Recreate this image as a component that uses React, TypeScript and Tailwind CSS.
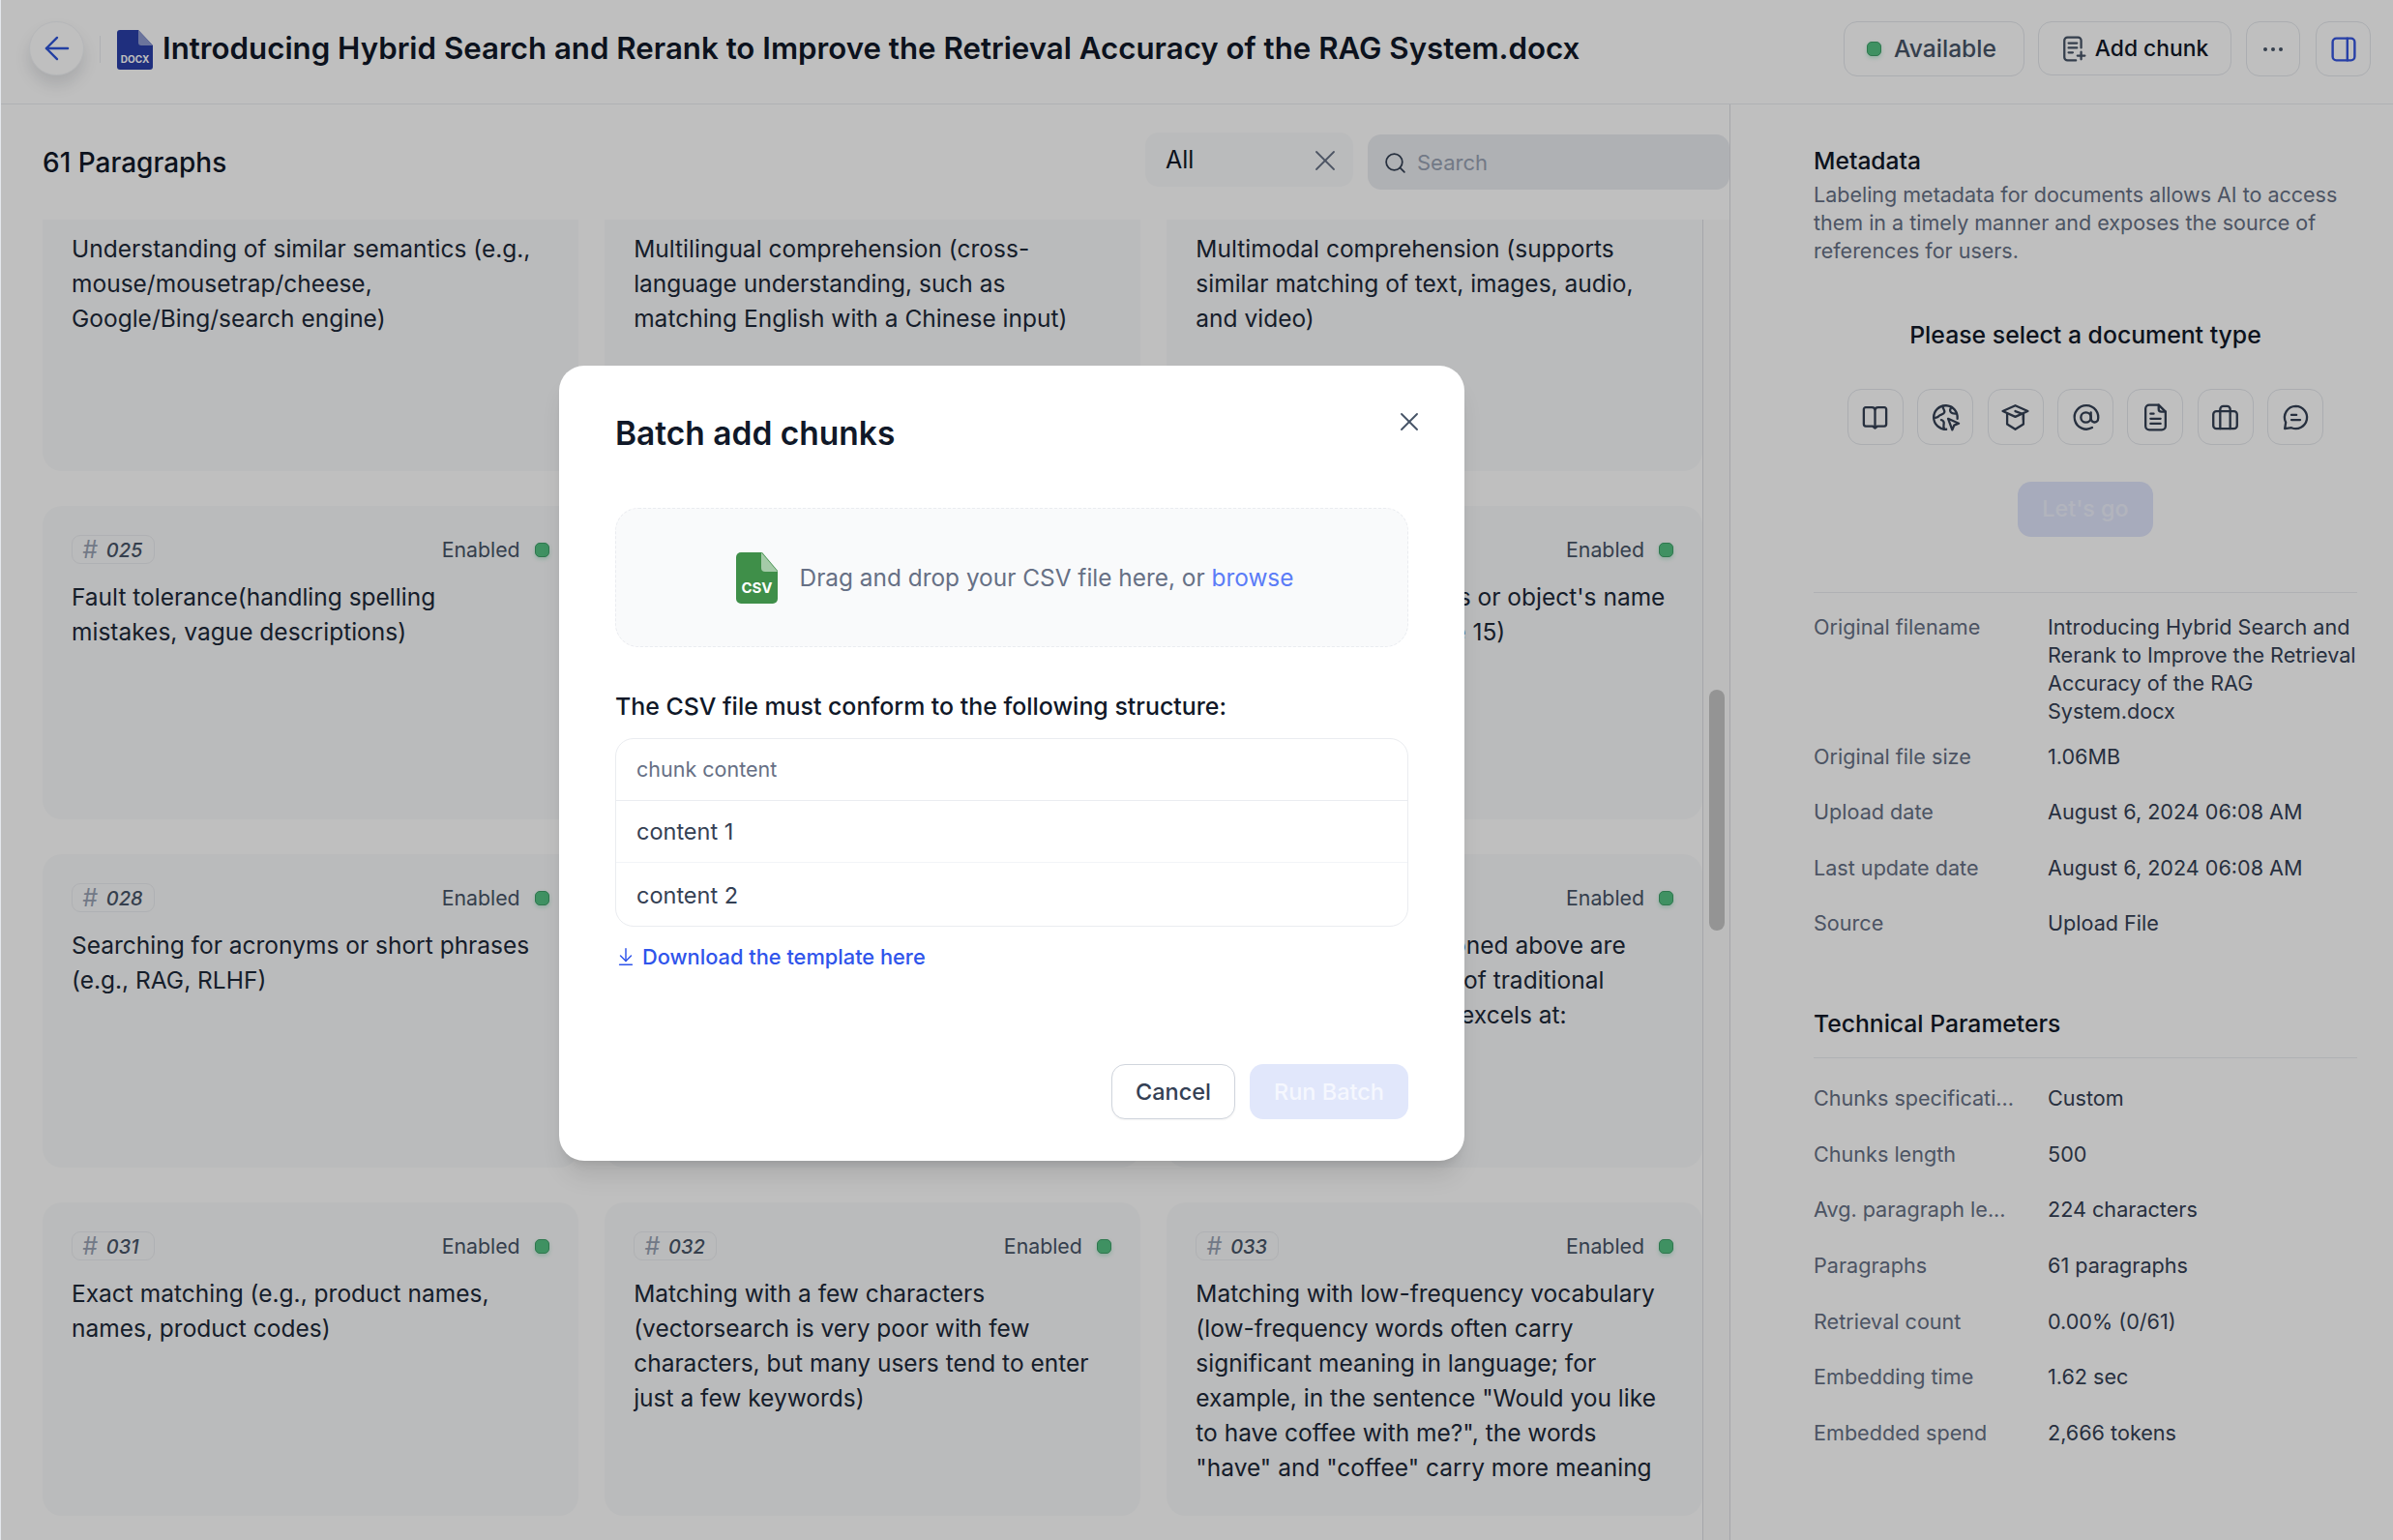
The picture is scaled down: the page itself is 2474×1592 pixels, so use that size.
// App.tsx — document chunks page with the "Batch add chunks" dialog open
import { ArrowLeft, ArrowDownToLine, Search, X } from "lucide-react";
import type { ReactNode } from "react";

// scrolled: header is above the fold, covered: card sits entirely under the dialog
type Chunk = { id: string; text?: ReactNode; scrolled?: boolean; covered?: boolean };

const CHUNKS: Chunk[] = [
  { id: "022", scrolled: true, text: "Understanding of similar semantics (e.g., mouse/mousetrap/cheese, Google/Bing/search engine)" },
  { id: "023", scrolled: true, text: "Multilingual comprehension (cross-language understanding, such as matching English with a Chinese input)" },
  { id: "024", scrolled: true, text: "Multimodal comprehension (supports similar matching of text, images, audio, and video)" },
  { id: "025", text: "Fault tolerance(handling spelling mistakes, vague descriptions)" },
  { id: "026", covered: true },
  { id: "027", text: <>Searching for a person's or object's name<br />(e.g., Elon Musk, iPhone 15)</> },
  { id: "028", text: "Searching for acronyms or short phrases (e.g., RAG, RLHF)" },
  { id: "029", covered: true },
  { id: "030", text: <>The query cases mentioned above are<br />really the key strengths of traditional<br />keyword search, which excels at:</> },
  { id: "031", text: "Exact matching (e.g., product names, names, product codes)" },
  { id: "032", text: "Matching with a few characters (vectorsearch is very poor with few characters, but many users tend to enter just a few keywords)" },
  { id: "033", text: 'Matching with low-frequency vocabulary (low-frequency words often carry significant meaning in language; for example, in the sentence "Would you like to have coffee with me?", the words "have" and "coffee" carry more meaning' },
];

const FILE_INFO: [string, string][] = [
  ["Original file size", "1.06MB"],
  ["Upload date", "August 6, 2024 06:08 AM"],
  ["Last update date", "August 6, 2024 06:08 AM"],
  ["Source", "Upload File"],
];

const TECH_INFO: [string, string][] = [
  ["Chunks specificati...", "Custom"],
  ["Chunks length", "500"],
  ["Avg. paragraph le...", "224 characters"],
  ["Paragraphs", "61 paragraphs"],
  ["Retrieval count", "0.00% (0/61)"],
  ["Embedding time", "1.62 sec"],
  ["Embedded spend", "2,666 tokens"],
];

function StatusDot() {
  return <span className="h-[15px] w-[15px] shrink-0 rounded-[5px] border border-[#3f9f69] bg-[#55c283] shadow-[0_2px_4px_rgba(23,178,106,0.25)]" />;
}

function DocxIcon() {
  return (
    <svg width="37" height="41" viewBox="0 0 37 41" className="shrink-0">
      <path d="M3 0h19l15 16v22a3 3 0 0 1-3 3H3a3 3 0 0 1-3-3V3a3 3 0 0 1 3-3z" fill="#2a3fa8" />
      <path d="M22 0l15 16H25a3 3 0 0 1-3-3z" fill="#8f9bd0" />
      <text x="18.5" y="34" textAnchor="middle" fontSize="10" fontWeight="700" fill="#fff" fontFamily="Inter, sans-serif">DOCX</text>
    </svg>
  );
}

function CsvIcon() {
  return (
    <svg width="43" height="53" viewBox="0 0 43 53" className="shrink-0">
      <path d="M5 0h22l16 19v29a5 5 0 0 1-5 5H5a5 5 0 0 1-5-5V5a5 5 0 0 1 5-5z" fill="#3f8f49" />
      <path d="M26 0l17 20H30a4 4 0 0 1-4-4z" fill="#a5cba8" />
      <text x="21.5" y="42" textAnchor="middle" fontSize="15" fontWeight="700" fill="#fff" fontFamily="Inter, sans-serif">CSV</text>
    </svg>
  );
}

const iconStroke = { fill: "none", stroke: "currentColor", strokeWidth: 1.5, strokeLinecap: "round", strokeLinejoin: "round" } as const;

function AddChunkIcon() {
  return (
    <svg width="26" height="29" viewBox="0 0 24 26" {...iconStroke} strokeWidth={2.1} className="shrink-0 text-[#475467]">
      <path d="M19 12V5a3 3 0 0 0-3-3H6a3 3 0 0 0-3 3v16a3 3 0 0 0 3 3h8" />
      <path d="M7 7.5h8M7 12h8M7 16.5h4" />
      <path d="M19 16v7M15.500 19.500h7" />
    </svg>
  );
}

function PanelIcon() {
  return (
    <svg width="26" height="26" viewBox="0 0 24 24" {...iconStroke} strokeWidth={2.2} className="text-[#3455df]">
      <rect x="1.500" y="1.500" width="21" height="21" rx="3.500" />
      <path d="M15.500 1.500v21" />
    </svg>
  );
}

const DOC_TYPE_ICONS: ReactNode[] = [
  <path d="M12 20V6.500C12 5 11 4 9.500 4H4.500C3.700 4 3 4.700 3 5.500v12c0 .8.7 1.500 1.500 1.500H10l2 1.500 2-1.500h5.500c.8 0 1.500-.7 1.500-1.500v-12C21 4.700 20.300 4 19.500 4h-5C13 4 12 5 12 6.500" />,
  <>
    <path d="M12.500 21.500A9.500 9.500 0 1 1 21.400 13" />
    <path d="M9.500 3c.5 2.500 2 3 1.500 5-.5 2-3.500 1.500-4.500 3-.8 1.300-3 1.500-4 1" />
    <path d="M17 3.800c-1.500 1-2 2.800-.8 4.200 1 1.200 3 1 4.200 1" />
    <path d="M8.500 14c1.500.3 2.500 1.500 2 3.500-.3 1.500-.5 2.500.5 4" />
    <path d="M14 13l8.500 3.800-3.700 1.500-1.500 3.700z" />
  </>,
  <>
    <path d="M12 2.500L2 7l10 4.500L22 7z" />
    <path d="M5.500 9.500v8l6.500 4 6.500-4v-8" />
    <path d="M12 7l6.500 2.500v4.500" />
  </>,
  <>
    <circle cx="12" cy="12" r="4" />
    <path d="M16 8v5a3 3 0 0 0 5.500 1.500A9.500 9.500 0 1 0 17 20.200" />
  </>,
  <>
    <path d="M14.500 2H7a3 3 0 0 0-3 3v14a3 3 0 0 0 3 3h10a3 3 0 0 0 3-3V7.500z" />
    <path d="M14.500 2v3.500c0 1.100.9 2 2 2H20" />
    <path d="M8 9h2.500M8 13h8M8 17h8" />
  </>,
  <>
    <rect x="2.500" y="7" width="19" height="14" rx="2.500" />
    <path d="M8 21V5.500A2.500 2.500 0 0 1 10.500 3h3A2.500 2.500 0 0 1 16 5.500V21" />
  </>,
  <>
    <path d="M12 3a9 9 0 1 1-3.500 17.300L3.200 21l.8-5A9 9 0 0 1 12 3z" />
    <path d="M8.500 10h4M8.500 14h7" />
  </>,
];

function ChunkCard({ chunk }: { chunk: Chunk }) {
  if (chunk.covered) return <div className="h-[324px] rounded-[20px] bg-[#f9fafb]" />;
  return (
    <div className="h-[324px] overflow-hidden rounded-[20px] bg-[#f9fafb] px-[30px] pt-[30px]">
      <div className="flex h-[30px] items-center justify-between">
        {!chunk.scrolled && (
          <>
            <span className="flex h-[30px] w-[86px] items-center gap-[9px] rounded-[9px] border border-[#eaecf0] pl-[10px] pt-px text-[20px] font-medium italic text-[#475467]">
              <span className="text-[25px] font-normal text-[#98a2b3]">#</span>
              {chunk.id}
            </span>
            <span className="flex items-center gap-[15px] pt-px text-[21.300px] text-[#475467]">
              Enabled
              <StatusDot />
            </span>
          </>
        )}
      </div>
      <p className="mt-[16px] pr-[6px] text-[24.500px] leading-[36px] text-[#1d2939]">{chunk.text}</p>
    </div>
  );
}

function InfoRow({ label, value }: { label: string; value: string }) {
  return (
    <div className="flex text-[21.600px] leading-[29px]">
      <div className="w-[242px] shrink-0 text-[#667085]">{label}</div>
      <div className="text-[#344054]">{value}</div>
    </div>
  );
}

function BatchDialog() {
  return (
    <div className="absolute left-[577px] top-[378px] h-[822px] w-[936px] rounded-[26px] bg-white px-[58px] pt-[46px] shadow-xl">
      <button className="absolute right-[41px] top-[42px] text-[#475467]">
        <X size={32} strokeWidth={1.400} />
      </button>
      <h2 className="text-[33.500px] font-semibold leading-[48px] text-[#101828]">Batch add chunks</h2>
      <div className="mt-[53px] flex h-[144px] items-center justify-center gap-[23px] rounded-[24px] border border-dashed border-[#eaecf0] bg-[#f9fafb] pl-[6px]">
        <CsvIcon />
        <span className="text-[24.400px] text-[#667085]">
          Drag and drop your CSV file here, or <span className="text-[#5b7cf7]">browse</span>
        </span>
      </div>
      <p className="mt-[43px] text-[24.900px] font-medium leading-[36px] text-[#101828]">
        The CSV file must conform to the following structure:
      </p>
      <div className="mt-[15px] overflow-hidden rounded-[19px] border border-[#eaecf0] text-[23.500px] text-[#344054]">
        <div className="flex h-[64px] items-center border-b border-[#eaecf0] px-[21px] text-[21.500px] text-[#667085]">chunk content</div>
        <div className="flex h-[64px] items-center border-b border-[#f2f4f7] px-[21px] pt-px">content 1</div>
        <div className="flex h-[65px] items-center px-[21px] pt-[2px]">content 2</div>
      </div>
      <a className="mt-[15px] flex h-[32px] items-center gap-[6px] text-[21.800px] font-medium text-[#2f54eb]">
        <ArrowDownToLine size={22} strokeWidth={1.600} />
        Download the template here
      </a>
      <div className="mt-[95px] flex justify-end gap-[15px]">
        <button className="h-[57px] w-[128px] rounded-[14px] border border-[#d0d5dd] bg-white text-[23.500px] font-medium text-[#344054] shadow-xs">
          Cancel
        </button>
        <button className="h-[57px] w-[164px] rounded-[14px] bg-[#e1e7fb] text-[23.500px] font-medium text-[#f5f7fe]">
          Run Batch
        </button>
      </div>
    </div>
  );
}

export default function App() {
  return (
    <div className="relative h-[1592px] w-[2474px] overflow-hidden border-l border-[#e4e7ec] bg-white font-['Inter',sans-serif]">
      {/* 상단 바 */}
      <header className="flex h-[108px] items-start border-b border-[#eaecf0] pl-[29px] pr-[23px] pt-[22px]">
        <button className="flex h-[56px] w-[57px] items-center justify-center rounded-full border border-[#f2f4f7] bg-white text-[#2f54d9] shadow-[0_10px_16px_rgba(16,24,40,0.12)]">
          <ArrowLeft size={38} strokeWidth={1.500} />
        </button>
        <span className="ml-[16px] mt-[15px] h-[28px] w-px bg-[#eaecf0]" />
        <span className="ml-[17px] mt-[9px]"><DocxIcon /></span>
        <h1 className="ml-[10px] text-[31.250px] font-semibold leading-[56px] text-[#101828]">
          Introducing Hybrid Search and Rerank to Improve the Retrieval Accuracy of the RAG System.docx
        </h1>
        <div className="ml-auto flex items-start gap-[14px]">
          <span className="flex h-[57px] w-[187px] items-center justify-center gap-[13px] rounded-[14px] border border-[#e4e7ec] pr-[5px] text-[24.600px] font-medium text-[#475467]">
            <StatusDot />
            Available
          </span>
          <button className="flex h-[56px] w-[200px] items-center justify-center gap-[9px] rounded-[14px] border border-[#e4e7ec] text-[22.800px] font-medium text-[#101828]">
            <AddChunkIcon />
            Add chunk
          </button>
          <button className="ml-px flex h-[57px] w-[56px] items-center justify-center gap-[4px] rounded-[14px] border border-[#e4e7ec]">
            <span className="h-[4px] w-[4px] rounded-full bg-[#475467]" />
            <span className="h-[4px] w-[4px] rounded-full bg-[#475467]" />
            <span className="h-[4px] w-[4px] rounded-full bg-[#475467]" />
          </button>
          <button className="ml-[2px] flex h-[57px] w-[57px] items-center justify-center rounded-[14px] border border-[#e4e7ec]">
            <PanelIcon />
          </button>
        </div>
      </header>

      <div className="flex h-[1484px]">
        {/* 청크 목록 */}
        <section className="flex w-[1788px] shrink-0 flex-col border-r border-[#dcdee3]">
          <div className="flex h-[119px] shrink-0 items-center pl-[43px]">
            <h2 className="text-[28px] font-medium text-[#101828]">61 Paragraphs</h2>
            <div className="ml-auto flex items-start gap-[15px]">
              <div className="-mt-[2px] flex h-[56px] w-[215px] items-center justify-between rounded-[14px] bg-[#f9fafb] pl-[21px] pr-[11px] pt-px text-[25px] text-[#101828]">
                All
                <X size={36} strokeWidth={1.200} className="text-[#667085]" />
              </div>
              <div className="flex h-[57px] w-[374px] items-center gap-[10px] rounded-[14px] bg-[#eaecf0] pl-[16px] pt-[2px] text-[22px] text-[#98a2b3]">
                <Search size={25} strokeWidth={1.700} className="text-[#344054]" />
                Search
              </div>
            </div>
          </div>
          <div className="flex min-h-0 flex-1">
            <div className="w-[1759px] shrink-0 overflow-hidden pl-[43px]">
              <div className="-mt-[64px] grid grid-cols-3 gap-x-[27.500px] gap-y-[36px]">
                {CHUNKS.map((c) => (
                  <ChunkCard key={c.id} chunk={c} />
                ))}
              </div>
            </div>
            <div className="flex flex-1 justify-center border-l border-[#dcdee3] bg-[#fbfbfb] pt-[486px]">
              <div className="h-[249px] w-[16px] rounded-full bg-[#c6c6c6]" />
            </div>
          </div>
        </section>

        {/* 메타데이터 패널 */}
        <aside className="flex-1 pl-[86px] pr-[37px]">
          <h3 className="mt-[42px] text-[24.600px] font-medium leading-[32px] text-[#101828]">Metadata</h3>
          <p className="mt-[5px] text-[21.500px] leading-[29px] text-[#667085]">
            Labeling metadata for documents allows AI to access them in a timely manner and exposes the source of references for users.
          </p>
          <div className="mt-[55px] text-center text-[24.800px] font-medium leading-[34px] text-[#101828]">Please select a document type</div>
          <div className="mt-[39px] flex justify-center gap-[14.400px]">
            {DOC_TYPE_ICONS.map((icon, i) => (
              <button key={i} className="flex h-[58px] w-[58px] items-center justify-center rounded-[14px] border border-[#e4e7ec] text-[#344054]">
                <svg width="31" height="31" viewBox="0 0 24 24" {...iconStroke} strokeWidth={1.800}>{icon}</svg>
              </button>
            ))}
          </div>
          <div className="mt-[38px] flex justify-center">
            <button className="h-[57px] w-[140px] rounded-[14px] bg-[#dfe5fb] text-[23.300px] font-medium text-[#eef1fd]">Let's go</button>
          </div>
          <div className="mt-[57px] border-t border-[#eaecf0] pt-[21px]">
            <InfoRow label="Original filename" value="Introducing Hybrid Search and Rerank to Improve the Retrieval Accuracy of the RAG System.docx" />
            <div className="mt-[18px] flex flex-col gap-[28.400px]">
              {FILE_INFO.map(([label, value]) => (
                <InfoRow key={label} label={label} value={value} />
              ))}
            </div>
          </div>
          <h3 className="mt-[73px] border-b border-[#eaecf0] pb-[19px] text-[24.700px] font-medium leading-[32px] text-[#101828]">Technical Parameters</h3>
          <div className="mt-[27px] flex flex-col gap-[28.600px]">
            {TECH_INFO.map(([label, value]) => (
              <InfoRow key={label} label={label} value={value} />
            ))}
          </div>
        </aside>
      </div>

      {/* 딤 처리 + 다이얼로그 */}
      <div className="absolute inset-0 bg-black/25" />
      <BatchDialog />
    </div>
  );
}
